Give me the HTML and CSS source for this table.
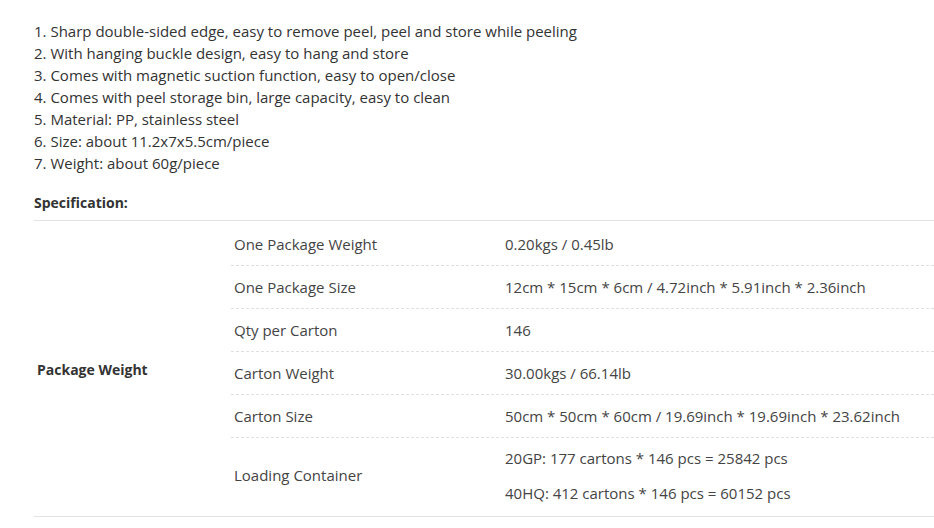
FILE: index.html
```html
<!DOCTYPE html>
<html>
<head>
<meta charset="utf-8">
<link rel="stylesheet" href="styles.css">
</head>
<body>
<div class="page">
  <ol class="features">
    <li>1. Sharp double-sided edge, easy to remove peel, peel and store while peeling</li>
    <li>2. With hanging buckle design, easy to hang and store</li>
    <li>3. Comes with magnetic suction function, easy to open/close</li>
    <li>4. Comes with peel storage bin, large capacity, easy to clean</li>
    <li>5. Material: PP, stainless steel</li>
    <li>6. Size: about 11.2x7x5.5cm/piece</li>
    <li>7. Weight: about 60g/piece</li>
  </ol>
  <h3 class="spec-title">Specification:</h3>
  <div class="spec">
    <div class="group-label">Package Weight</div>
    <div class="rows">
      <div class="row"><div class="key">One Package Weight</div><div class="val">0.20kgs / 0.45lb</div></div>
      <div class="row"><div class="key">One Package Size</div><div class="val">12cm * 15cm * 6cm / 4.72inch * 5.91inch * 2.36inch</div></div>
      <div class="row"><div class="key">Qty per Carton</div><div class="val">146</div></div>
      <div class="row"><div class="key">Carton Weight</div><div class="val">30.00kgs / 66.14lb</div></div>
      <div class="row"><div class="key">Carton Size</div><div class="val">50cm * 50cm * 60cm / 19.69inch * 19.69inch * 23.62inch</div></div>
      <div class="row last"><div class="key">Loading Container</div><div class="val multi"><span>20GP: 177 cartons * 146 pcs = 25842 pcs</span><span>40HQ: 412 cartons * 146 pcs = 60152 pcs</span></div></div>
    </div>
  </div>
</div>
</body>
</html>
```
FILE: styles.css
```css
html, body {
  margin: 0;
  padding: 0;
  background: #fff;
}
body {
  font-family: "Open Sans", "Noto Sans", sans-serif;
  font-size: 15px;
  color: #333;
}
.page {
  padding: 20px 0 0 34px;
}
.features {
  list-style: none;
  margin: 0;
  padding: 0;
  line-height: 22px;
}
.spec-title {
  margin: 18px 0 6px;
  font-size: 14px;
  line-height: 22px;
  font-weight: 700;
  color: #333;
}
.spec {
  display: grid;
  grid-template-columns: 197px 1fr;
  border-top: 1px solid #e3e3e3;
  border-bottom: 1px solid #e3e3e3;
  padding-top: 1px;
  color: #444;
}
.group-label {
  display: flex;
  align-items: center;
  padding-left: 3px;
  font-size: 14px;
  font-weight: 700;
  color: #333;
}
.rows {
  display: flex;
  flex-direction: column;
}
.row {
  display: grid;
  grid-template-columns: 271px 1fr;
  align-items: center;
  height: 42px;
  border-bottom: 1px dashed #e0e0e0;
  padding-left: 3px;
  line-height: 22px;
}
.row:first-child {
  height: 43px;
}
.row.last {
  height: 74px;
  padding-bottom: 4px;
  border-bottom: none;
}
.val.multi {
  display: flex;
  flex-direction: column;
  gap: 13px;
}
```
